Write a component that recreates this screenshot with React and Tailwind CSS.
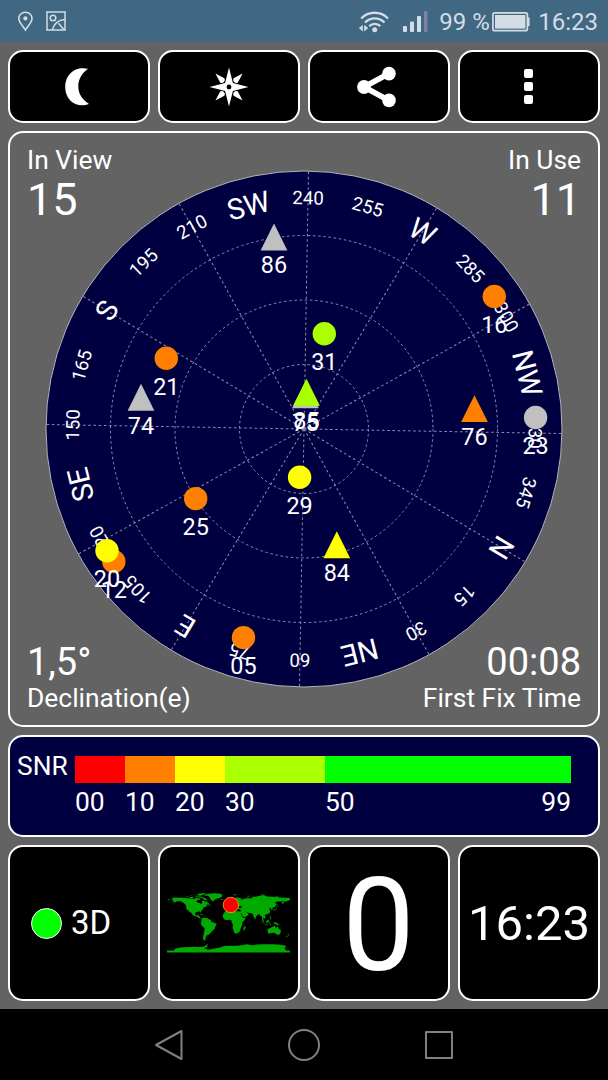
import clsx from 'clsx'

const CX = 304
const CY = 429
const RADIUS = 258
const HEADING = 239

const COLORS = {
  gray: '#c0c0c0',
  orange: '#ff8000',
  yellow: '#ffff00',
  lime: '#aaff00',
}

const DIAL = [
  'N', '15', '30', 'NE', '60', '75', 'E', '105', '120', 'SE', '150', '165',
  'S', '195', '210', 'SW', '240', '255', 'W', '285', '300', 'NW', '330', '345',
]

// drawn in order, later ones lie on top
const SATELLITES = [
  { id: '86', x: 274, y: 237, color: 'gray', tri: true },
  { id: '74', x: 141, y: 397.3, color: 'gray', tri: true },
  { id: '21', x: 166.3, y: 358.3, color: 'orange' },
  { id: '31', x: 324.3, y: 333.7, color: 'lime' },
  { id: '16', x: 494.3, y: 296.4, color: 'orange' },
  { id: '23', x: 535.6, y: 417.5, color: 'gray' },
  { id: '76', x: 474.5, y: 408.7, color: 'orange', tri: true },
  { id: '84', x: 336.8, y: 544.8, color: 'yellow', tri: true },
  { id: '29', x: 299.6, y: 477.3, color: 'yellow' },
  { id: '25', x: 195.7, y: 498.6, color: 'orange' },
  { id: '12', x: 113.8, y: 561.5, color: 'orange' },
  { id: '20', x: 107, y: 550.8, color: 'yellow' },
  { id: '05', x: 243.5, y: 637.6, color: 'orange' },
  { id: '75', x: 305.5, y: 394.8, color: 'gray', tri: true },
  { id: '85', x: 306.5, y: 392.3, color: 'lime', tri: true },
]

const SNR = [
  { label: '00', className: 'w-[50px] bg-[#ff0000]' },
  { label: '10', className: 'w-[50px] bg-[#ff8000]' },
  { label: '20', className: 'w-[50px] bg-[#ffff00]' },
  { label: '30', className: 'w-[100px] bg-[#aaff00]' },
  { label: '50', className: 'w-[246px] bg-[#00ff00]' },
]

// continents as lon,-lat
const LAND = [
  // North America
  'M-168-66 -162-70 -156-71 -141-70 -128-70 -115-68 -108-68 -96-67 -94-71 -88-68 -82-68 -82-66 -87-64 -94-61 -93-58 -85-55 -82-53 -80-51 -78-55 -77-58 -78-62 -73-62 -69-59 -65-60 -61-56 -56-53 -60-50 -66-50 -65-48 -61-46 -66-44 -70-43 -74-40 -76-35 -81-31 -80-26 -82-27 -84-30 -90-29 -97-27 -97-22 -95-18 -91-18 -90-21 -87-21 -88-16 -83-15 -83-10 -78-9 -80-7 -85-10 -92-14 -97-16 -105-20 -109-26 -114-31 -112-24 -117-32 -121-35 -124-40 -124-47 -130-54 -138-59 -146-61 -152-59 -160-55 -164-54 -157-58 -165-61 -161-64Z',
  'M-180-66 -174-67 -170-65 -176-64Z',
  'M-90-73 -80-73 -72-71 -62-66 -66-63 -72-64 -74-68 -80-70 -88-71Z',
  'M-117-72 -105-73 -102-70 -113-69Z M-125-74 -118-76 -118-73Z M-100-73 -93-74 -96-71Z M-115-76 -105-77 -107-75Z M-98-76 -84-76 -80-75 -92-74Z M-92-81 -78-83 -63-83 -75-79 -83-76 -88-78Z M-105-79 -96-80 -98-78Z M-86-66 -82-65 -85-63Z M-59-51 -53-50 -54-47 -59-48Z',
  // Greenland
  'M-72-78 -60-82 -40-83.5 -22-82 -18-78 -20-73 -24-70 -33-68 -40-65 -44-60 -50-62 -54-68 -55-71 -60-76 -68-76Z',
  // Caribbean
  'M-85-22 -80-23 -74-20 -78-20Z M-73-20 -68-19 -72-17.5Z',
  // South America
  'M-79-8 -75-11 -71-12 -62-10 -52-5 -50 0 -44 2 -35 6 -35 9 -39 15 -41 22 -48 27 -53 34 -58 38 -62 39 -65 42 -68 50 -66 55 -72 54 -75 48 -73 38 -71 30 -70 18 -76 14 -81 6 -80 1Z',
  // Europe and Asia
  'M-9-37 -9-43 -2-43 -1-46 -5-48 2-51 8-54 8-57 10-55 18-55 21-57 24-59 30-60 22-60 21-63 25-66 22-66 17-61 16-56 11-59 6-58 5-62 13-67 20-70 28-71 40-67 34-65 42-65 45-68 60-69 68-69 70-73 80-73 87-75 104-78 113-74 128-73 140-73 150-71 160-70 172-70 180-69 180-65 177-62 170-60 163-59 162-56 157-51 156-57 163-62 155-59 143-59 135-55 141-53 140-48 135-43 129-42 129-35 126-34 125-39 121-40 118-38 122-37 120-34 122-30 119-25 112-21 108-21 106-18 109-12 105-9 100-13 103-5 104-1 101-3 98-8 98-16 94-16 91-22 87-21 80-15 80-10 77-8 73-17 72-21 67-25 57-26 50-30 56-25 60-22 54-17 45-13 42-17 38-23 34-28 36-36 30-36 27-38 30-41 41-41 37-45 39-47 33-46 28-42 23-40 23-36 19-41 13-45 18-40 16-38 12-42 8-44 3-43 0-39 -5-36Z',
  // Africa
  'M-6-35 10-37 11-33 20-31 32-31 35-27 38-19 43-11 51-12 47-5 40 3 40 10 36 18 35 24 31 30 26 34 19 35 16 29 12 18 13 9 9 1 9-4 4-6 -8-4 -13-8 -17-14 -16-22 -10-30Z M49 12 50 16 47 25 44 25 44 17Z',
  // Islands of the North Atlantic and the Arctic
  'M-24-66 -14-66 -15-64 -22-63.5Z M-5-50 1-51 0-53 -3-58 -6-58 -3-54Z M-10-52 -6-53 -8-55Z M11-79 20-80 26-80 18-77Z M52-71 58-75 68-77 58-73 56-71Z M45-80 60-81.5 50-80Z M93-80 104-79 98-81Z M138-75.5 150-75 142-74Z',
  // Japan, Indonesia and around
  'M130-32 135-34 140-36 141-41 139-38 132-35Z M140-42 145-43.5 142-45.5Z M142-46 144-50 142-54Z M120-22 122-25 121-25Z M120-18 122-18 124-12 126-7 122-8 121-13Z M95-5 99-3 106 5 104 6Z M105 7 114 7 115 9 107 8Z M109-1 113-3 117-7 119-5 116 3 110 2Z M120 5 120-1 125-1 121 1 123 5Z M131 1 138 2 145 5 150 10 143 9 138 8 133 4Z M80-9 82-7 80-6Z M118 9 126 8 124 10Z',
  // Australia and New Zealand
  'M114 22 122 18 129 15 136 12 137 16 141 17 142 11 146 19 153 25 153 31 150 37 144 39 138 35 132 32 124 33 116 35Z M145 41 148 41 147 43.5Z M173 35 178 38 175 41Z M172 41 174 42 168 46 167 45Z',
  // Antarctica
  'M-180 84 -160 84 -156 79 -148 77 -135 75 -110 74 -100 73 -85 74 -75 73 -68 70 -58 63 -62 68 -62 74 -72 77 -60 82 -40 78 -28 76 -12 71 0 70 20 70 40 69 52 66 70 69 82 67 100 66 115 66 130 66 145 67 160 69 170 71 164 77 168 84 180 84 180 90 -180 90Z',
].join(' ')

function Tile({ className, children }) {
  return (
    <div className={clsx('flex items-center justify-center rounded-[15px] border-2 border-white bg-black', className)}>
      {children}
    </div>
  )
}

function StatusBar() {
  return (
    <div className="flex h-[42px] items-center justify-between bg-[#406882] pr-[10px] pl-[17px] text-2xl leading-none text-[#d4dce6]">
      <div className="flex items-center gap-3">
        <svg width="17" height="21" viewBox="0 0 17 21" fill="none" stroke="currentColor" strokeWidth="1.6">
          <path d="M8.4 19 C6 15 1.8 11.5 1.8 7.5 A6.6 6.3 0 0 1 15 7.5 C15 11.5 10.8 15 8.4 19Z" />
          <circle cx="8.4" cy="7.4" r="2.1" fill="currentColor" stroke="none" />
        </svg>
        <svg width="20" height="20" viewBox="0 0 20 20" fill="none" stroke="currentColor" strokeWidth="1.5">
          <rect x="1" y="1" width="18" height="18" />
          <circle cx="7" cy="7" r="2.8" />
          <path d="M6.3 18.8 C8 13 12 9 19 8.5 M12.5 12.3 L17.5 18.3" />
        </svg>
      </div>
      <div className="flex items-center pt-px">
        <svg className="mr-[13px]" width="32" height="22" viewBox="0 0 32 22" fill="none" stroke="currentColor" strokeWidth="2.3">
          <path d="M3.2 7.5 A18.5 18.5 0 0 1 30 7.5" />
          <path d="M7 11.5 A13.5 13.5 0 0 1 26.5 11.5" />
          <path d="M11.2 15.2 A8 8 0 0 1 22.3 15.2" />
          <circle cx="16.7" cy="18.8" r="2.5" fill="currentColor" stroke="none" />
          <path d="M4.8 14 V20.5 L0.8 17Z M6.2 14 V20.5 L10.2 17Z" fill="currentColor" stroke="none" />
        </svg>
        <svg className="mr-[11px]" width="25" height="21" viewBox="0 0 25 21" fill="currentColor">
          <rect x="0" y="15" width="4" height="6" rx="1" />
          <rect x="7" y="10.5" width="4" height="10.5" rx="1" />
          <rect x="14" y="5" width="4" height="16" rx="1" />
          <rect x="21" y="0" width="3.4" height="21" rx="1" fill="#8082a3" />
        </svg>
        <span className="mr-[3px] w-[50px] whitespace-nowrap">99 %</span>
        <svg className="mr-2" width="38" height="20" viewBox="0 0 38 20">
          <rect x="0.9" y="0.9" width="34.5" height="17.8" rx="2" fill="none" stroke="currentColor" strokeWidth="1.7" />
          <rect x="3" y="3" width="30.4" height="13.6" fill="currentColor" />
          <path d="M36 5.5 h1.6 v8.5 h-1.6Z" fill="currentColor" />
        </svg>
        <span>16:23</span>
      </div>
    </div>
  )
}

function Toolbar() {
  return (
    <div className="grid h-[73px] grid-cols-4 gap-2">
      <Tile>
        <svg className="-ml-1" width="40" height="40" viewBox="0 0 40 40" fill="#fff">
          <path d="M31 1.8 C27 0.9 22.5 1 19 2.6 C12 5.5 8.2 12.5 8.2 20 C8.2 27.5 12 34.5 19 37.3 C23 38.9 28 38.6 32 37 C25.5 33 21.3 27 21.3 19.6 C21.3 12 25 6 31 1.8Z" />
        </svg>
      </Tile>
      <Tile>
        <svg className="-ml-px" width="40" height="40" viewBox="-20 -20 40 40" fill="#fff">
          <path d="M0-19.5 L3.9-3.9 L19.5 0 L3.9 3.9 L0 19.5 L-3.9 3.9 L-19.5 0 L-3.9-3.9Z" />
          {[45, 135, 225, 315].map((a) => (
            <path key={a} d="M0-19.2 L3-9.5 Q2.6-7.3 0-7.2 Q-2.6-7.3 -3-9.5Z" transform={`rotate(${a})`} />
          ))}
          <circle r="2.4" fill="#000" />
        </svg>
      </Tile>
      <Tile>
        <svg className="-ml-[7px]" width="40" height="42" viewBox="0 0 40 42" fill="#fff">
          <path d="M33 7.5 L8 21 L33 34.5" fill="none" stroke="#fff" strokeWidth="5.5" />
          <circle cx="8" cy="21" r="6.9" />
          <circle cx="33" cy="7.6" r="6.8" />
          <circle cx="33" cy="34.4" r="6.8" />
        </svg>
      </Tile>
      <Tile>
        <div className="-mr-px -ml-[2px] flex flex-col gap-1">
          <span className="size-[9px] rounded-[2px] bg-white" />
          <span className="size-[9px] rounded-[2px] bg-white" />
          <span className="size-[9px] rounded-[2px] bg-white" />
        </div>
      </Tile>
    </div>
  )
}

function Satellite({ id, x, y, color, tri }) {
  return (
    <g transform={`translate(${x} ${y})`}>
      {tri ? (
        <path d="M0-13.5 L13.4 13.4 H-13.4Z" fill={COLORS[color]} />
      ) : (
        <circle r="11.7" fill={COLORS[color]} />
      )}
      <text y="36.4" fontSize="23.4" textAnchor="middle" fill="#fff">{id}</text>
    </g>
  )
}

function SkyView() {
  return (
    <svg className="absolute -top-[2px] -left-[2px]" width="592" height="596" viewBox="8 131 592 596">
      <circle cx={CX} cy={CY} r={RADIUS} fill="#000040" stroke="#b4b4bc" strokeWidth="1" />
      <g transform={`translate(${CX} ${CY})`} fill="none" stroke="#8c8cac" strokeWidth="1" strokeDasharray="2.6 2.6">
        <circle r="64.5" />
        <circle r="129" />
        <circle r="193.5" />
        {[0, 30, 60, 90, 120, 150, 180, 210, 240, 270, 300, 330].map((az) => (
          <path key={az} d={`M0 0 V-${RADIUS}`} transform={`rotate(${az - HEADING})`} />
        ))}
      </g>
      {DIAL.map((label, i) => {
        const big = i % 3 === 0
        return (
          <text
            key={label}
            y={big ? -220 : -224.7}
            fontSize={big ? 29 : 18.6}
            textAnchor="middle"
            fill="#fff"
            transform={`translate(${CX} ${CY}) rotate(${i * 15 - HEADING})`}
          >
            {label}
          </text>
        )
      })}
      {SATELLITES.map((s) => (
        <Satellite key={s.id} {...s} />
      ))}
    </svg>
  )
}

function SkyPanel() {
  return (
    <div className="relative flex h-[596px] flex-col justify-between rounded-[15px] border-2 border-white px-[17px] pt-3 pb-[11px]">
      <SkyView />
      <div className="flex justify-between">
        <div>
          <p className="text-[26.4px] leading-[30px]">In View</p>
          <p className="text-[45px] leading-[50px]">15</p>
        </div>
        <div className="text-right">
          <p className="text-[26.4px] leading-[30px]">In Use</p>
          <p className="text-[45px] leading-[50px]">11</p>
        </div>
      </div>
      <div className="flex justify-between">
        <div>
          <p className="text-[38px] leading-[40px]">1,5°</p>
          <p className="text-[26.4px] leading-[32px]">Declination(e)</p>
        </div>
        <div className="text-right">
          <p className="text-[38px] leading-[40px]">00:08</p>
          <p className="text-[26.4px] leading-[32px]">First Fix Time</p>
        </div>
      </div>
    </div>
  )
}

function SnrPanel() {
  return (
    <div className="flex h-[102px] rounded-[15px] border-2 border-white bg-[#000040] pt-[19px] pl-[7px] text-[26.4px]">
      <span className="w-[58px] leading-[21px]">SNR</span>
      <div className="relative flex">
        {SNR.map((s) => (
          <div key={s.label} className={clsx('h-[27px]', s.className)}>
            <p className="pt-[33px] leading-[26px]">{s.label}</p>
          </div>
        ))}
        <p className="absolute top-[33px] right-0 leading-[26px]">99</p>
      </div>
    </div>
  )
}

function WorldMap() {
  return (
    <svg className="-ml-[2px]" width="123" height="59.5" viewBox="-180 -84 360 174">
      <path d={LAND} fill="#00aa00" />
      <circle cx="7" cy="-49" r="22.5" fill="#ff0000" stroke="#ffa020" strokeWidth="2.5" />
    </svg>
  )
}

function BottomTiles() {
  return (
    <div className="grid h-[156px] grid-cols-4 gap-2">
      <Tile className="gap-[9px] pr-4 text-[33px]">
        <span className="size-[31px] rounded-full border border-white bg-[#00ff00]" />
        <span>3D</span>
      </Tile>
      <Tile>
        <WorldMap />
      </Tile>
      <Tile className="pt-1 pr-px text-[129px] leading-none">0</Tile>
      <Tile className="pt-0.5 text-[49px]">16:23</Tile>
    </div>
  )
}

function NavBar() {
  return (
    <div className="flex h-[71px] items-center justify-center gap-[101px] bg-black">
      <svg width="34" height="34" viewBox="0 0 34 34" fill="none" stroke="#808080" strokeWidth="2" strokeLinejoin="round">
        <path d="M29.5 3 V31 L4 17Z" />
      </svg>
      <svg width="34" height="34" viewBox="0 0 34 34" fill="none" stroke="#808080" strokeWidth="2">
        <circle cx="17" cy="17" r="15" />
      </svg>
      <svg width="34" height="34" viewBox="0 0 34 34" fill="none" stroke="#808080" strokeWidth="2" strokeLinejoin="round">
        <rect x="4" y="4" width="26" height="26" />
      </svg>
    </div>
  )
}

export default function App() {
  return (
    <div className="h-[1080px] w-[608px] overflow-hidden bg-[#636363] font-[Roboto,sans-serif] text-white">
      <StatusBar />
      <div className="flex flex-col gap-2 p-2">
        <Toolbar />
        <SkyPanel />
        <SnrPanel />
        <BottomTiles />
      </div>
      <NavBar />
    </div>
  )
}
